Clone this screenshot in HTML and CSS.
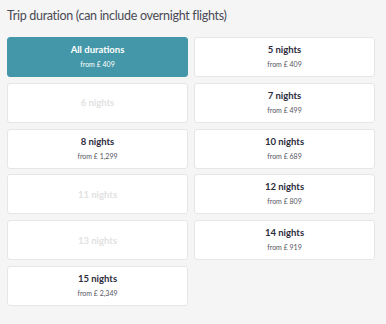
FILE: index.html
```html
<!DOCTYPE html>
<html lang="en">
<head>
    <meta charset="UTF-8">
    <meta name="viewport" content="width=device-width, initial-scale=1.0">
    <title>Trip duration</title>
    <link rel="stylesheet" href="styles.css">
</head>
<body>
    <main class="filter">
        <h2 class="filter-title">Trip duration (can include overnight flights)</h2>
        <div class="options">
            <button class="option selected">
                <span class="nights">All durations</span>
                <span class="price">from £ 409</span>
            </button>
            <button class="option">
                <span class="nights">5 nights</span>
                <span class="price">from £ 409</span>
            </button>
            <button class="option disabled">
                <span class="nights">6 nights</span>
            </button>
            <button class="option">
                <span class="nights">7 nights</span>
                <span class="price">from £ 499</span>
            </button>
            <button class="option">
                <span class="nights">8 nights</span>
                <span class="price">from £ 1,299</span>
            </button>
            <button class="option">
                <span class="nights">10 nights</span>
                <span class="price">from £ 689</span>
            </button>
            <button class="option disabled">
                <span class="nights">11 nights</span>
            </button>
            <button class="option">
                <span class="nights">12 nights</span>
                <span class="price">from £ 809</span>
            </button>
            <button class="option disabled">
                <span class="nights">13 nights</span>
            </button>
            <button class="option">
                <span class="nights">14 nights</span>
                <span class="price">from £ 919</span>
            </button>
            <button class="option">
                <span class="nights">15 nights</span>
                <span class="price">from £ 2,349</span>
            </button>
        </div>
    </main>
</body>
</html>
```

FILE: styles.css
```css
*{
    margin: 0;
    padding: 0;
    box-sizing: border-box;
}

body{
    background-color: #f5f5f5;
    font-family: "Lato", "Open Sans", sans-serif;
}

.filter{
    padding: 7px 11px 0 7px;
}

.filter-title{
    font-size: 12.5px;
    font-weight: 400;
    letter-spacing: -0.3px;
    color: #4a4a55;
    line-height: 18px;
    margin-bottom: 12px;
}

.options{
    display: grid;
    grid-template-columns: 1fr 1fr;
    column-gap: 6px;
    row-gap: 5.8px;
}

.option{
    height: 40px;
    display: flex;
    flex-direction: column;
    justify-content: center;
    align-items: center;
    gap: 5px;
    padding-bottom: 2px;
    background-color: #fff;
    border: 1px solid #e6e6e6;
    border-radius: 3px;
    font-family: inherit;
    cursor: pointer;
}

.nights{
    font-size: 9.5px;
    line-height: 11px;
    font-weight: 700;
    color: #2c2c3c;
}

.price{
    font-size: 7px;
    line-height: 8px;
    color: #55555f;
}

.selected{
    background-color: #4497a8;
    border-color: #4497a8;
}

.selected .nights,
.selected .price{
    color: #fff;
}

.disabled .nights{
    color: #e2e2e2;
}

.disabled{
    padding-bottom: 0;
}
```
